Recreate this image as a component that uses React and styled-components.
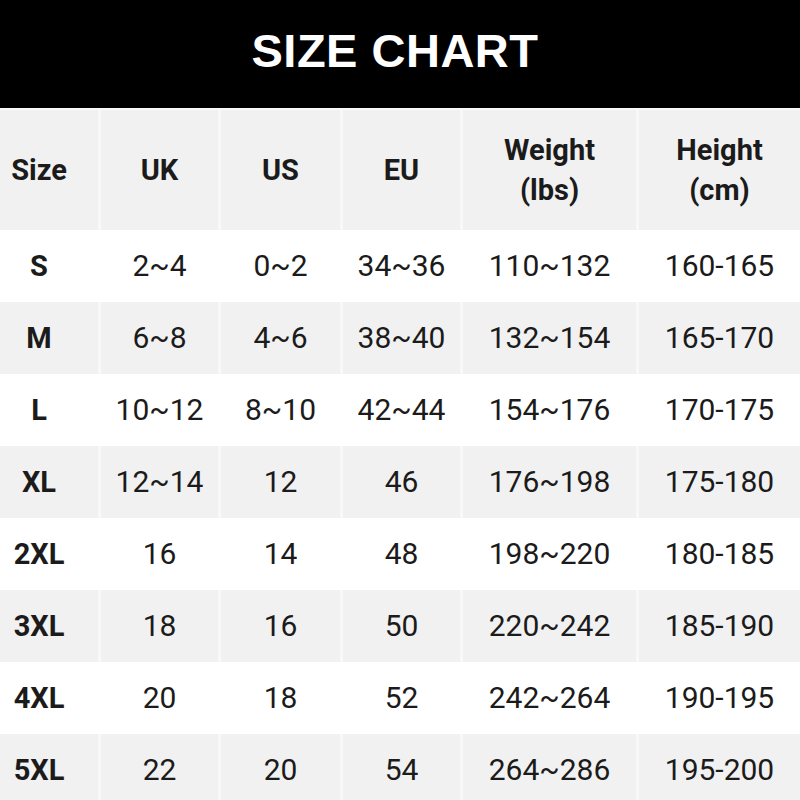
import React from 'react';
import styled, { createGlobalStyle } from 'styled-components';

const GlobalStyle = createGlobalStyle`
  html, body {
    margin: 0;
    padding: 0;
    background: #ffffff;
  }
  body {
    width: 800px;
    height: 800px;
    overflow: hidden;
  }
`;

const Page = styled.div`
  width: 800px;
  height: 800px;
  overflow: hidden;
  background: #fff;
  font-family: Roboto, 'Liberation Sans', sans-serif;
  color: #1b1b1b;
`;

const Banner = styled.div`
  height: 108px;
  background: #000;
  display: flex;
  align-items: center;
  justify-content: center;
  padding: 0 10px 8px 0;
  box-sizing: border-box;
`;

const Divider = styled.div`
  height: 2px;
  background: #fafafa;
`;

const Title = styled.h1`
  margin: 0;
  color: #fff;
  font-family: 'Liberation Sans', Arial, sans-serif;
  font-weight: 700;
  font-size: 47px;
  letter-spacing: 0.5px;
`;

const Row = styled.div`
  display: grid;
  grid-template-columns: 98px 117px 119px 117px 173px 1fr;
  column-gap: 3px;
  height: ${props => (props.head ? '120px' : '72px')};
  background: ${props => (props.shaded ? '#f8f8f8' : '#ffffff')};
`;

const Cell = styled.div`
  display: flex;
  align-items: center;
  justify-content: center;
  text-align: center;
  background: ${props => (props.shaded ? '#f1f1f1' : '#ffffff')};
  font-size: ${props => (props.bold ? '29px' : '30px')};
  font-weight: ${props => (props.bold ? 700 : 400)};
  line-height: 40px;
  padding-right: ${props => (props.first ? '20px' : '0')};
`;

const headers = ['Size', 'UK', 'US', 'EU', ['Weight', '(lbs)'], ['Height', '(cm)']];

const rows = [
  ['S', '2~4', '0~2', '34~36', '110~132', '160-165'],
  ['M', '6~8', '4~6', '38~40', '132~154', '165-170'],
  ['L', '10~12', '8~10', '42~44', '154~176', '170-175'],
  ['XL', '12~14', '12', '46', '176~198', '175-180'],
  ['2XL', '16', '14', '48', '198~220', '180-185'],
  ['3XL', '18', '16', '50', '220~242', '185-190'],
  ['4XL', '20', '18', '52', '242~264', '190-195'],
  ['5XL', '22', '20', '54', '264~286', '195-200'],
];

export default function App() {
  return (
    <Page>
      <GlobalStyle />
      <Banner>
        <Title>SIZE CHART</Title>
      </Banner>
      <Divider />
      <Row head shaded>
        {headers.map((h, i) => (
          <Cell key={i} shaded bold first={i === 0}>
            {Array.isArray(h) ? (
              <span>
                {h[0]}
                <br />
                {h[1]}
              </span>
            ) : (
              h
            )}
          </Cell>
        ))}
      </Row>
      {rows.map((r, ri) => (
        <Row key={ri} shaded={ri % 2 === 1}>
          {r.map((v, ci) => (
            <Cell key={ci} shaded={ri % 2 === 1} bold={ci === 0} first={ci === 0}>
              {v}
            </Cell>
          ))}
        </Row>
      ))}
    </Page>
  );
}
